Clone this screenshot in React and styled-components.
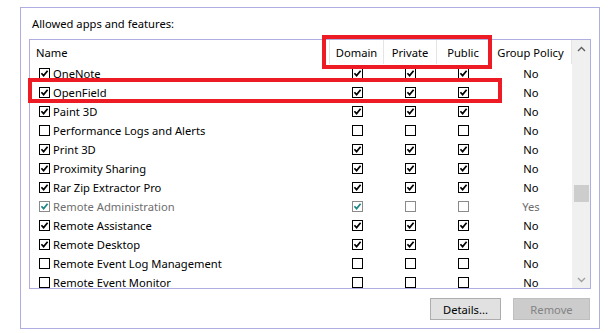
import React from "react";
import styled, { createGlobalStyle } from "styled-components";

const Global = createGlobalStyle`
  html, body { margin: 0; padding: 0; background: #ffffff; }
  body { font-family: "Noto Sans", "Open Sans", sans-serif; font-size: 11.2px; color: #000; }
`;

const Page = styled.div`
  width: 609px;
  height: 333px;
  padding: 7px 0 0 20px;
  box-sizing: border-box;
  position: relative;
`;

const Group = styled.div`
  width: 580px;
  height: 322px;
  box-sizing: border-box;
  border: 1px solid #aeaee0;
  padding: 0 9px 0 8px;
  display: flex;
  flex-direction: column;
`;

const Title = styled.div`
  height: 31px;
  line-height: 31px;
  padding-left: 3px;
  flex-shrink: 0;
`;

const List = styled.div`
  width: 562px;
  height: 250px;
  flex-shrink: 0;
  box-sizing: border-box;
  border: 1px solid #aeaee0;
  display: flex;
  overflow: hidden;
`;

const Table = styled.div`
  width: 542px;
  display: flex;
  flex-direction: column;
`;

const COLS = "300px 54px 53px 53px 82px";

const HeaderRow = styled.div`
  display: grid;
  grid-template-columns: ${COLS};
  height: 24px;
  flex-shrink: 0;
`;

const HeadCell = styled.div`
  display: flex;
  align-items: center;
  justify-content: ${(p) => (p.$left ? "flex-start" : "center")};
  padding-left: ${(p) => (p.$left ? "6px" : "0")};
  border-right: 1px solid #e5e5e5;
  box-sizing: border-box;
  height: 24px;
`;

const Row = styled.div`
  display: grid;
  grid-template-columns: ${COLS};
  height: 19px;
  flex-shrink: 0;
  color: ${(p) => (p.$disabled ? "#6d6d6d" : "#000")};
`;

const NameCell = styled.div`
  display: flex;
  align-items: center;
  padding-left: 9px;
  gap: 3px;
  white-space: nowrap;
`;

const Cell = styled.div`
  display: flex;
  align-items: center;
  justify-content: center;
`;

const Box = styled.span`
  width: 11px;
  height: 11px;
  box-sizing: border-box;
  border: 1px solid ${(p) => (p.$disabled ? "#8a8a8a" : "#000")};
  background: #fff;
  display: inline-flex;
  align-items: center;
  justify-content: center;
  flex-shrink: 0;
`;

const ScrollBar = styled.div`
  width: 18px;
  background: #f0f0f0;
  display: flex;
  flex-direction: column;
  align-items: center;
`;

const Arrow = styled.div`
  height: 17px;
  width: 17px;
  display: flex;
  align-items: center;
  justify-content: center;
  flex-shrink: 0;
`;

const Track = styled.div`
  flex: 1;
  width: 100%;
  display: flex;
  flex-direction: column;
  align-items: center;
  padding-top: 128px;
  box-sizing: border-box;
`;

const Thumb = styled.div`
  width: 15px;
  height: 17px;
  background: #cdcdcd;
`;

const Buttons = styled.div`
  display: flex;
  justify-content: flex-end;
  gap: 12px;
  margin-top: 9px;
`;

const Button = styled.div`
  height: 22px;
  width: ${(p) => p.$w}px;
  box-sizing: border-box;
  border: 1px solid ${(p) => (p.$disabled ? "#bfbfbf" : "#adadad")};
  background: ${(p) => (p.$disabled ? "#cccccc" : "#e1e1e1")};
  color: ${(p) => (p.$disabled ? "#838383" : "#000")};
  display: flex;
  align-items: center;
  justify-content: center;
`;

const RedBox = styled.div`
  position: absolute;
  left: ${(p) => p.$x}px;
  top: ${(p) => p.$y}px;
  width: ${(p) => p.$w}px;
  height: ${(p) => p.$h}px;
  box-sizing: border-box;
  border: 4px solid #ed1c24;
  pointer-events: none;
`;

function Check({ on, disabled }) {
  return (
    <Box $disabled={disabled}>
      {on ? (
        <svg width="9" height="9" viewBox="0 0 9 9">
          <path
            d="M1.4 4.2 L3.6 6.6 L7.6 1.8"
            fill="none"
            stroke={disabled ? "#1f8585" : "#000"}
            strokeWidth="1.7"
          />
        </svg>
      ) : null}
    </Box>
  );
}

const rows = [
  ["OneNote", 1, 1, 1, 1, "No"],
  ["OpenField", 1, 1, 1, 1, "No"],
  ["Paint 3D", 1, 1, 1, 1, "No"],
  ["Performance Logs and Alerts", 0, 0, 0, 0, "No"],
  ["Print 3D", 1, 1, 1, 1, "No"],
  ["Proximity Sharing", 1, 1, 1, 1, "No"],
  ["Rar Zip Extractor Pro", 1, 1, 1, 1, "No"],
  ["Remote Administration", 1, 1, 0, 0, "Yes", true],
  ["Remote Assistance", 1, 1, 1, 1, "No"],
  ["Remote Desktop", 1, 1, 1, 1, "No"],
  ["Remote Event Log Management", 0, 0, 0, 0, "No"],
  ["Remote Event Monitor", 0, 0, 0, 0, "No"],
];

export default function App() {
  return (
    <Page>
      <Global />
      <Group>
        <Title>Allowed apps and features:</Title>
        <List>
          <Table>
            <HeaderRow>
              <HeadCell $left>Name</HeadCell>
              <HeadCell>Domain</HeadCell>
              <HeadCell>Private</HeadCell>
              <HeadCell>Public</HeadCell>
              <HeadCell>Group Policy</HeadCell>
            </HeaderRow>
            {rows.map(([name, n, d, pr, pu, gp, dis]) => (
              <Row key={name} $disabled={dis}>
                <NameCell>
                  <Check on={n} disabled={dis} />
                  {name}
                </NameCell>
                <Cell>
                  <Check on={d} disabled={dis} />
                </Cell>
                <Cell>
                  <Check on={pr} disabled={dis} />
                </Cell>
                <Cell>
                  <Check on={pu} disabled={dis} />
                </Cell>
                <Cell>{gp}</Cell>
              </Row>
            ))}
          </Table>
          <ScrollBar>
            <Arrow>
              <svg width="9" height="6" viewBox="0 0 9 6">
                <path d="M1 5 L4.5 1.5 L8 5" fill="none" stroke="#606060" strokeWidth="1.4" />
              </svg>
            </Arrow>
            <Track>
              <Thumb />
            </Track>
            <Arrow>
              <svg width="9" height="6" viewBox="0 0 9 6">
                <path d="M1 1 L4.5 4.5 L8 1" fill="none" stroke="#a0a0a0" strokeWidth="1.4" />
              </svg>
            </Arrow>
          </ScrollBar>
        </List>
        <Buttons>
          <Button $w={71}>Details...</Button>
          <Button $w={77} $disabled>Remove</Button>
        </Buttons>
      </Group>
      <RedBox $x={322} $y={35} $w={170} $h={34} />
      <RedBox $x={28} $y={78} $w={474} $h={25} />
    </Page>
  );
}
